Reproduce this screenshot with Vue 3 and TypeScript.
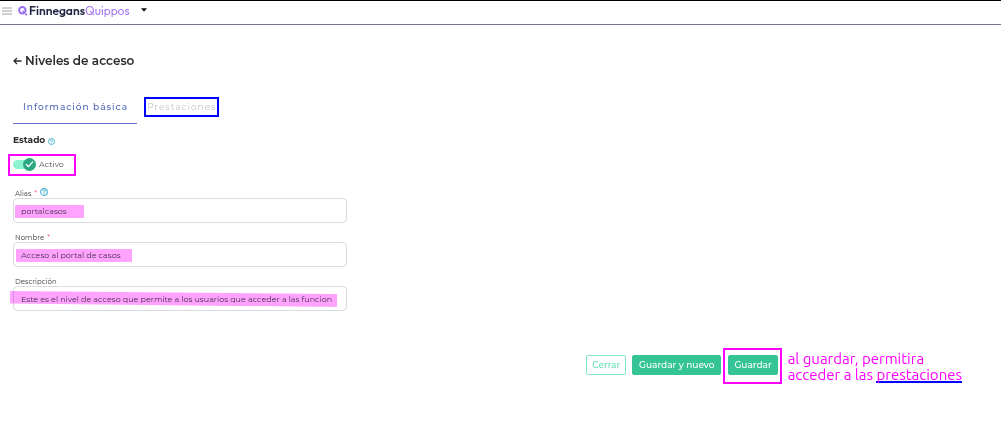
<script setup lang="ts">
import { ref } from 'vue'

interface Field {
  id: string
  label: string
  required: boolean
  help: boolean
  value: string
}

const active = ref(true)
const fields = ref<Field[]>([
  { id: 'alias', label: 'Alias', required: true, help: true, value: 'portalcasos' },
  { id: 'nombre', label: 'Nombre', required: true, help: false, value: 'Acceso al portal de casos' },
  {
    id: 'descripcion',
    label: 'Descripción',
    required: false,
    help: false,
    value: 'Este es el nivel de acceso que permite a los usuarios que acceder a las funcionalidades',
  },
])
</script>

<template>
  <div class="page">
    <header class="topbar">
      <button class="plain menu" aria-label="Menú">
        <svg width="10" height="8" viewBox="0 0 10 8"><path d="M0 1h10M0 4h10M0 7h10" stroke="#a3a3a3" stroke-width="1.2" /></svg>
      </button>
      <a class="brand" href="#">
        <svg width="10" height="10" viewBox="0 0 10 10" fill="none">
          <circle cx="4.3" cy="4.3" r="3.2" stroke="#9a6cf0" stroke-width="2" />
          <path d="M4.6 4.8l2 2" stroke="#9a6cf0" stroke-width="1.4" />
          <circle cx="8.2" cy="8.4" r="1.1" fill="#9a6cf0" />
        </svg>
        <span class="first">Finnegans</span><span class="second">Quippos</span>
      </a>
      <button class="plain caret" aria-label="Cambiar producto">
        <svg width="6" height="4" viewBox="0 0 6 4"><path d="M0 .3h6L3 3.7z" fill="#111" /></svg>
      </button>
    </header>

    <main>
      <h1>
        <button class="plain back" aria-label="Volver">
          <svg width="9" height="8" viewBox="0 0 9 8" fill="none" stroke="#2b2b2f" stroke-width="1.3"><path d="M8.5 4H1M4 1L1 4l3 3" /></svg>
        </button>
        Niveles de acceso
      </h1>

      <nav class="tabs">
        <button class="plain tab current">Información básica</button>
        <button class="plain tab boxed">Prestaciones</button>
      </nav>

      <form @submit.prevent>
        <div class="state-title">
          Estado
          <svg class="help" width="7" height="7" viewBox="0 0 8 8" fill="none" stroke="#45b3cc"><circle cx="4" cy="4" r="3.4" stroke-width="1.1" /><path d="M2.9 3.2c0-1.5 2.3-1.4 2.2 0C5 4 4 3.9 4 4.8M4 5.4v.9" stroke-width="1" /></svg>
        </div>
        <label class="toggle">
          <input v-model="active" type="checkbox" />
          <span class="track">
            <span class="knob">
              <svg width="9" height="8" viewBox="0 0 9 8" fill="none" stroke="#fff" stroke-width="1.4"><path d="M1 4.2l2.4 2.4L8 1.6" /></svg>
            </span>
          </span>
          <span>Activo</span>
        </label>

        <div v-for="f in fields" :key="f.id" class="field">
          <label :for="f.id">
            {{ f.label }} <span v-if="f.required" class="star">*</span>
            <svg v-if="f.help" class="help" width="8" height="8" viewBox="0 0 8 8" fill="none" stroke="#45b3cc"><circle cx="4" cy="4" r="3.4" stroke-width="1.1" /><path d="M2.9 3.2c0-1.5 2.3-1.4 2.2 0C5 4 4 3.9 4 4.8M4 5.4v.9" stroke-width="1" /></svg>
          </label>
          <div class="box">
            <input :id="f.id" v-model="f.value" type="text" />
            <span class="mark" :class="f.id"></span>
          </div>
        </div>
      </form>

      <footer>
        <div class="actions">
          <button class="btn outline">Cerrar</button>
          <button class="btn wide">Guardar y nuevo</button>
        </div>
        <span class="ring"><button class="btn">Guardar</button></span>
        <p class="note">al guardar, permitira<br />acceder a las <span class="under">prestaciones</span></p>
      </footer>
    </main>
  </div>
</template>

<style>
body {
  background: #fff;
}
</style>

<style scoped>
.page {
  font-family: Montserrat, Inter, 'Open Sans', sans-serif;
  color: #2b2b2f;
}
.page * {
  box-sizing: border-box;
}
.plain {
  border: 0;
  padding: 0;
  background: none;
  font: inherit;
  color: inherit;
}
.topbar {
  display: flex;
  align-items: center;
  height: 25px;
  padding: 0 2px 3px;
  border-top: 1px solid #000;
  border-bottom: 1px solid #747887;
}
.topbar svg {
  display: block;
}
.brand {
  display: flex;
  align-items: center;
  margin-left: 6px;
  text-decoration: none;
}
.brand svg {
  margin-right: 1px;
}
.first {
  font: 600 12px/16px Outfit, Inter, sans-serif;
  color: #1f2440;
}
.second {
  font: 400 12px/16px Outfit, Inter, sans-serif;
  color: #a679f2;
}
.caret {
  margin-left: 11px;
  padding-bottom: 3px;
}
main {
  padding: 28px 39px 36px 13px;
}
h1 {
  display: flex;
  align-items: center;
  gap: 3px;
  margin: 0;
  font-size: 12px;
  line-height: 16px;
  font-weight: 600;
}
.back svg {
  display: block;
}
.tabs {
  display: flex;
  align-items: flex-start;
  gap: 7px;
  margin-top: 28px;
}
.tab {
  height: 20px;
  font-size: 9px;
  line-height: 16px;
  letter-spacing: 1px;
  color: #c2c2c6;
}
.current {
  height: 27px;
  padding: 0 9px 6px 10px;
  border-bottom: 1px solid #6376c6;
  font-weight: 500;
  color: #5468bd;
}
.boxed {
  border: 2px solid #0000ff;
  padding: 0 1px;
}
form {
  max-width: 334px;
}
.state-title {
  display: flex;
  align-items: center;
  gap: 3px;
  margin-top: 9px;
  font-size: 9px;
  line-height: 14px;
  font-weight: 700;
}
.state-title .help {
  margin-top: 3px;
}
.toggle {
  display: flex;
  align-items: center;
  gap: 3px;
  width: 68px;
  height: 22px;
  margin: 7px 0 0 -5px;
  padding: 0 0 2px 3px;
  border: 2px solid #ff00ff;
  font-size: 8px;
  color: #55555b;
}
.toggle input {
  position: absolute;
  opacity: 0;
}
.track {
  display: flex;
  align-items: center;
  justify-content: flex-end;
  width: 23px;
  height: 9px;
  border-radius: 5px;
  background: #8cf2cf;
}
.knob {
  display: grid;
  place-items: center;
  flex: none;
  width: 13px;
  height: 13px;
  border-radius: 50%;
  background: #2ba881;
}
.field {
  margin-top: 9px;
}
.toggle + .field {
  margin-top: 12px;
}
.field label {
  display: flex;
  align-items: center;
  gap: 3px;
  height: 10px;
  padding: 1px 0 0 2px;
  font-size: 7px;
  line-height: 10px;
  color: #3c3c42;
}
.star {
  color: #f0384a;
}
.field .help {
  margin-bottom: 3px;
}
.box {
  position: relative;
}
.box input {
  display: block;
  width: 100%;
  height: 25px;
  padding: 0 14px 0 7px;
  border: 1px solid #d9dbe3;
  border-radius: 4px;
  background: #fff;
  font: 8px/16px Montserrat, Inter, 'Open Sans', sans-serif;
  color: #4a4a50;
}
.mark {
  position: absolute;
  pointer-events: none;
  top: 7px;
  left: 2px;
  width: 69px;
  height: 13px;
  background: #ffa3ff;
  mix-blend-mode: multiply;
}
.mark.nombre {
  left: 3px;
  width: 116px;
}
.mark.descripcion {
  top: 5px;
  left: -3px;
  width: 327px;
  height: 16px;
  clip-path: polygon(0 0, 100% 18%, 100% 100%, 0 78%);
}
footer {
  display: flex;
  align-items: center;
  justify-content: flex-end;
  margin-top: 37px;
}
.actions {
  display: flex;
  gap: 6px;
  margin-right: 2px;
  padding-bottom: 2px;
}
.btn {
  height: 20px;
  padding: 0 5px;
  border: 1px solid #35c496;
  border-radius: 2px;
  background: #35c496;
  color: #fff;
  font: 500 9px/16px Montserrat, Inter, 'Open Sans', sans-serif;
}
.wide {
  padding: 0 6px;
}
.outline {
  border-color: #7deac6;
  color: #63dfb8;
  background: #fff;
}
.ring {
  display: flex;
  align-items: center;
  height: 36px;
  padding: 0 2px 2px 3px;
  border: 2px solid #ff00ff;
}
.note {
  margin: 1px 0 0 6px;
  font: 15px/16px Ubuntu, 'Noto Sans', sans-serif;
  color: #ff00ff;
}
.under {
  display: inline-block;
  height: 16px;
  border-bottom: 2px solid #0000ff;
}
</style>
